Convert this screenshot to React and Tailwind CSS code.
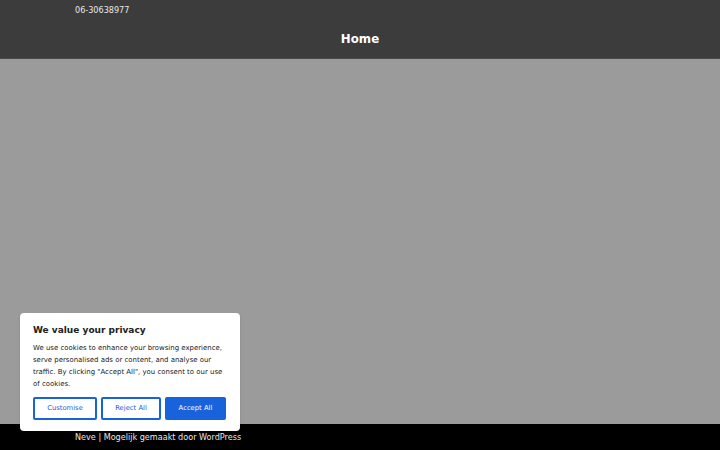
export default function App() {
  return (
    <div className="w-[720px] h-[450px] flex flex-col relative overflow-hidden" style={{ fontFamily: '"DejaVu Sans", sans-serif' }}>
      <header className="bg-[#3c3c3c] h-[59px] flex flex-col shrink-0 border-b border-[#4a4a4a]">
        <div className="h-[20px] flex items-center pl-[75px] pt-[1px] text-[8.1px] text-[#e8e8e8]">06-30638977</div>
        <div className="flex-1 flex items-center justify-center pt-[2px]">
          <span className="text-[11.8px] font-bold text-white">Home</span>
        </div>
      </header>
      <main className="flex-1 bg-[#9b9b9b]"></main>
      <footer className="h-[26px] bg-black flex items-center pl-[75px] pt-[1px] text-[8.1px] text-[#e8e8e8] shrink-0">
        Neve | Mogelijk gemaakt door WordPress
      </footer>
      <div className="absolute left-[20px] top-[313px] w-[220px] bg-white rounded-[4px] px-[13px] pt-[10px] pb-[11px] shadow">
        <div className="text-[9px] font-bold text-[#212121] leading-[14px]">We value your privacy</div>
        <p className="mt-[5px] text-[6.95px] leading-[12px] text-[#212121]">
          We use cookies to enhance your browsing experience, serve personalised ads or content, and analyse our traffic. By clicking "Accept All", you consent to our use of cookies.
        </p>
        <div className="mt-[7px] flex gap-[4px]">
          <button className="w-[64px] h-[23px] border-2 border-[#1863dc] rounded-[2px] text-[6.8px] text-[#1863dc] bg-white">Customise</button>
          <button className="w-[60px] h-[23px] border-2 border-[#1863dc] rounded-[2px] text-[6.8px] text-[#1863dc] bg-white">Reject All</button>
          <button className="w-[61px] h-[23px] border-2 border-[#1863dc] rounded-[2px] text-[6.8px] text-white bg-[#1863dc]">Accept All</button>
        </div>
      </div>
    </div>
  );
}
